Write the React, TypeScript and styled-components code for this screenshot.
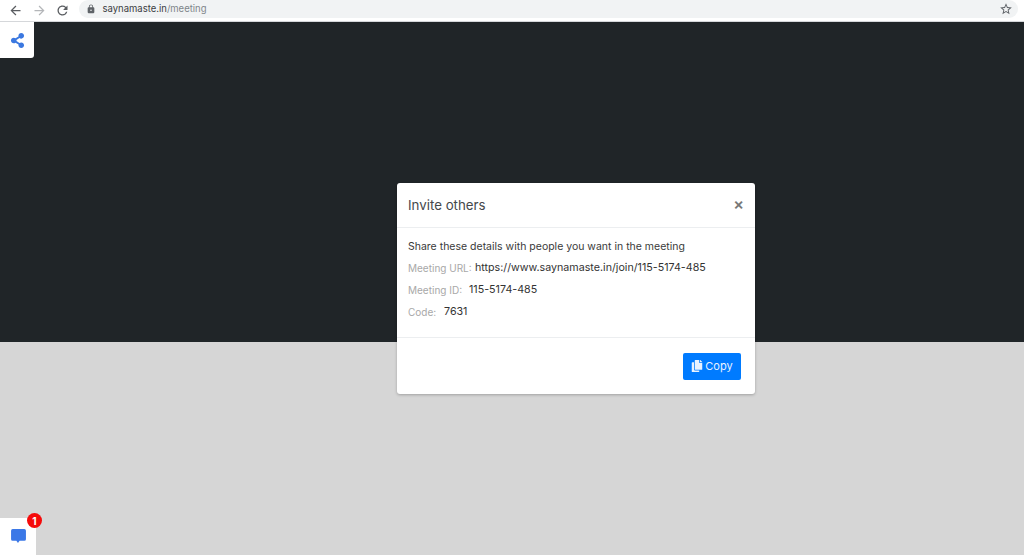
import React from "react";
import styled, { createGlobalStyle } from "styled-components";
import { FaShareAlt, FaCopy } from "react-icons/fa";
import { MdArrowBack, MdArrowForward, MdRefresh, MdLock, MdStarBorder } from "react-icons/md";

const GlobalStyle = createGlobalStyle`
  html, body {
    margin: 0;
    padding: 0;
    height: 100%;
    overflow: hidden;
  }
  #root {
    height: 100%;
  }
`;

const Page = styled.div`
  position: relative;
  width: 1024px;
  height: 555px;
  display: flex;
  flex-direction: column;
  font-family: "Inter", "Liberation Sans", sans-serif;
  background: #d6d6d6;
  overflow: hidden;
`;

const BrowserBar = styled.div`
  height: 22px;
  flex: none;
  display: flex;
  align-items: center;
  padding: 0 6px 0 8px;
  background: #fff;
  border-bottom: 1px solid #d5d7da;
  box-sizing: border-box;
`;

const NavButton = styled.span<{ $dim?: boolean }>`
  width: 23.5px;
  display: flex;
  color: ${(p) => (p.$dim ? "#b4b6b9" : "#5a5d61")};
  font-size: 15px;
`;

const Omnibox = styled.div`
  flex: 1;
  height: 18px;
  margin: -4px 0 0 0;
  display: flex;
  align-items: center;
  gap: 7px;
  padding: 0 5px 0 7px;
  background: #f1f3f4;
  border-radius: 9px;
  font-size: 9.5px;
  color: #3c4043;
`;

const Url = styled.span`
  flex: 1;
  span {
    color: #80868b;
  }
`;

const Stage = styled.div`
  height: 320px;
  flex: none;
  background: #202528;
`;

const Floor = styled.div`
  flex: 1;
  background: #d6d6d6;
`;

const ShareTab = styled.div`
  position: absolute;
  left: 0;
  top: 22px;
  width: 34px;
  height: 36px;
  display: flex;
  align-items: center;
  justify-content: center;
  background: #fff;
  border-bottom-right-radius: 3px;
  color: #3b78e0;
  font-size: 15px;
`;

const ChatTab = styled.div`
  position: absolute;
  left: 0;
  bottom: 0;
  width: 36px;
  height: 37px;
  display: flex;
  align-items: center;
  justify-content: center;
  background: #fff;
  color: #3b78e7;
`;

const Badge = styled.span`
  position: absolute;
  left: 27px;
  top: -5px;
  width: 15px;
  height: 15px;
  border-radius: 50%;
  display: flex;
  align-items: center;
  justify-content: center;
  background: #f50a0a;
  color: #fff;
  font-size: 10px;
  font-weight: 700;
`;

const Modal = styled.div`
  position: absolute;
  left: 397px;
  top: 183px;
  width: 358px;
  height: 211px;
  display: flex;
  flex-direction: column;
  background: #fff;
  border-radius: 3px;
  box-shadow: 0 1px 3px rgba(0, 0, 0, 0.25);
  color: #212529;
`;

const ModalHeader = styled.div`
  height: 44px;
  flex: none;
  display: flex;
  align-items: center;
  justify-content: space-between;
  padding: 0 11px;
  border-bottom: 1px solid #eceef0;
`;

const Title = styled.h5`
  margin: 0;
  font-size: 13.3px;
  font-weight: 400;
  color: #45484b;
`;

const Close = styled.span`
  font-size: 16px;
  font-weight: 600;
  line-height: 1;
  color: #777;
  margin-top: -3px;
`;

const ModalBody = styled.div`
  flex: 1;
  display: flex;
  flex-direction: column;
  gap: 7px;
  padding: 11px 11px 0;
  border-bottom: 1px solid #eceef0;
  font-size: 10.5px;
`;

const Intro = styled.div`
  margin: 1px 0 -1px;
  line-height: 14px;
  color: #3a3a3a;
`;

const Row = styled.div`
  display: flex;
  align-items: center;
  height: 15px;
`;

const Label = styled.span<{ $width: number }>`
  width: ${(p) => p.$width}px;
  color: #a8a8a8;
  font-size: 10px;
`;

const Value = styled.span`
  color: #333;
  font-size: 10.7px;
`;

const ModalFooter = styled.div`
  height: 56px;
  flex: none;
  display: flex;
  align-items: center;
  justify-content: flex-end;
  padding: 0 14px 0 0;
  box-sizing: border-box;
`;

const CopyButton = styled.button`
  width: 58px;
  height: 27px;
  display: flex;
  align-items: center;
  justify-content: center;
  gap: 2px;
  padding: 0;
  border: 0;
  border-radius: 2px;
  background: #007bff;
  color: #e8f2ff;
  font-family: inherit;
  font-size: 11px;
`;

const details = [
  { label: "Meeting URL:", width: 67, value: "https://www.saynamaste.in/join/115-5174-485" },
  { label: "Meeting ID:", width: 61, value: "115-5174-485" },
  { label: "Code:", width: 36, value: "7631" },
];

const App = () => (
  <Page>
    <GlobalStyle />
    <BrowserBar>
      <NavButton>
        <MdArrowBack />
      </NavButton>
      <NavButton $dim>
        <MdArrowForward />
      </NavButton>
      <NavButton>
        <MdRefresh />
      </NavButton>
      <Omnibox>
        <MdLock size={10} color="#5f6368" />
        <Url>
          saynamaste.in<span>/meeting</span>
        </Url>
        <MdStarBorder size={14} color="#5f6368" />
      </Omnibox>
    </BrowserBar>
    <Stage />
    <Floor />
    <ShareTab>
      <FaShareAlt />
    </ShareTab>
    <ChatTab>
      <svg width="17" height="17" viewBox="0 0 16 16" fill="currentColor">
        <path d="M2.5 1h11A1.5 1.5 0 0 1 15 2.5v8a1.5 1.5 0 0 1-1.5 1.5H9l-1.5 2L6 12H2.5A1.500 1.500 0 0 1 1 10.500v-8A1.500 1.500 0 0 1 2.500 1z" />
      </svg>
      <Badge>1</Badge>
    </ChatTab>
    <Modal>
      <ModalHeader>
        <Title>Invite others</Title>
        <Close>×</Close>
      </ModalHeader>
      <ModalBody>
        <Intro>Share these details with people you want in the meeting</Intro>
        {details.map(({ label, width, value }) => (
          <Row key={label}>
            <Label $width={width}>{label}</Label>
            <Value>{value}</Value>
          </Row>
        ))}
      </ModalBody>
      <ModalFooter>
        <CopyButton>
          <FaCopy size={12} />
          Copy
        </CopyButton>
      </ModalFooter>
    </Modal>
  </Page>
);

export default App;
